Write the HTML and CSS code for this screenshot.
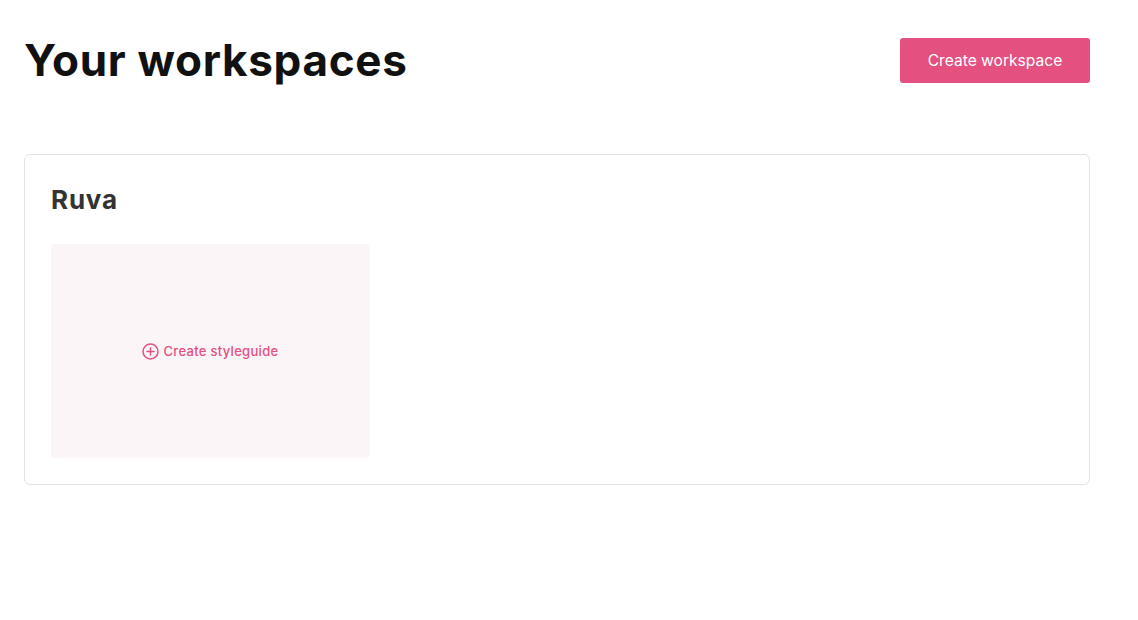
FILE: index.html
```html
<!DOCTYPE html>
<html lang="en">
<head>
  <meta charset="UTF-8">
  <title>Your workspaces</title>
  <link rel="stylesheet" href="styles.css">
</head>
<body>
  <div class="container">
    <div class="header">
      <h1>Your workspaces</h1>
      <button class="create-btn">Create workspace</button>
    </div>
    <div class="workspace">
      <h2>Ruva</h2>
      <div class="styleguides">
        <a class="new-styleguide" href="#">
          <svg width="17" height="17" viewBox="0 0 17 17" fill="none" stroke="#e4507f" stroke-width="1.5" stroke-linecap="round">
            <circle cx="8.5" cy="8.5" r="7.5"/>
            <path d="M8.5 5v7M5 8.5h7"/>
          </svg>
          <span>Create styleguide</span>
        </a>
      </div>
    </div>
  </div>
</body>
</html>
```

FILE: styles.css
```css
body {
  margin: 0;
  font-family: Inter, "Liberation Sans", sans-serif;
  background: #fff;
}
.container {
  width: 1066px;
  padding: 38px 0 0 24px;
}
.header {
  display: flex;
  justify-content: space-between;
  align-items: center;
  height: 45px;
  margin-bottom: 71px;
}
h1 {
  margin: 0 0 2px;
  font-size: 44px;
  font-weight: 700;
  letter-spacing: 0.7px;
  color: #111;
}
.create-btn {
  width: 190px;
  height: 45px;
  padding: 0;
  border: none;
  border-radius: 3px;
  background: #e4507f;
  color: #fff;
  font-family: inherit;
  font-size: 15.6px;
}
.workspace {
  height: 329px;
  padding: 0 26px;
  border: 1px solid #e2e2e2;
  border-radius: 6px;
}
h2 {
  margin: 0;
  padding-top: 30px;
  height: 59px;
  font-size: 26px;
  line-height: 30px;
  font-weight: 700;
  letter-spacing: 0.8px;
  color: #333;
}
.styleguides {
  display: flex;
}
.new-styleguide {
  display: flex;
  align-items: center;
  justify-content: center;
  gap: 5px;
  width: 319px;
  height: 214px;
  padding-right: 1px;
  box-sizing: border-box;
  border-radius: 4px;
  background: #fbf5f7;
  color: #e4507f;
  font-size: 13px;
  font-weight: 500;
  letter-spacing: 0.3px;
  text-decoration: none;
}
```
